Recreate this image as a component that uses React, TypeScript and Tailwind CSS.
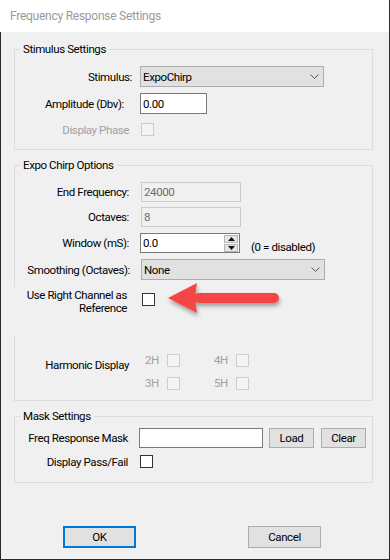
import React from "react";

function Check({ disabled = false, className = "" }: { disabled?: boolean; className?: string }) {
  return (
    <div
      className={
        "w-[13px] h-[13px] shrink-0 border " +
        (disabled ? "border-[#cccccc] bg-[#f4f4f4] " : "border-[#333333] bg-white ") +
        className
      }
    />
  );
}

function Chevron() {
  return (
    <svg width="9" height="5" viewBox="0 0 9 5" className="shrink-0">
      <path d="M0.5 0.5 L4.5 4.5 L8.5 0.5" stroke="#555" strokeWidth="1" fill="none" />
    </svg>
  );
}

function Select({ value }: { value: string }) {
  return (
    <div className="ml-[1px] w-[184px] h-[21px] border border-[#adadad] bg-[#e1e1e1] flex items-center justify-between pl-[2px] pr-[4px]">
      <span>{value}</span>
      <Chevron />
    </div>
  );
}

function Arrow() {
  return (
    <svg width="118" height="42" viewBox="0 0 118 42" className="shrink-0 -mt-[9px] ml-[11px]">
      <defs>
        <filter id="sh" x="-10%" y="-30%" width="130%" height="190%">
          <feDropShadow dx="1" dy="3" stdDeviation="2" floodColor="#000" floodOpacity="0.35" />
        </filter>
      </defs>
      <g filter="url(#sh)" fill="#f64545">
        <path d="M2 18 L31 3 Q28 18 31 33 Z" />
        <rect x="28" y="13" width="85" height="10" rx="5" />
      </g>
    </svg>
  );
}

export default function App() {
  return (
    <div className="w-[390px] h-[560px] flex flex-col font-['Roboto','Liberation_Sans',sans-serif] text-[11.5px] leading-[16px] tracking-[-0.4px] text-black border-r border-[#2b2b2b] overflow-hidden">
      <div className="h-[32px] shrink-0 bg-white flex items-center pl-[10px] text-[#9a9a9a] text-[12px] tracking-[-0.25px]">
        Frequency Response Settings
      </div>
      <div className="flex-1 bg-[#f0f0f0] border-l border-b border-[#2b2b2b] pl-[13px] flex flex-col">
        {/* Stimulus Settings */}
        <fieldset className="w-[359px] border border-[#dcdcdc] mt-[9px] pb-[13px]">
          <legend className="ml-[5px] px-[3px] leading-[16px]">Stimulus Settings</legend>
          <div className="flex items-center h-[21px] mt-[9px]">
            <div className="w-[125px] text-right pr-[8px]">Stimulus:</div>
            <div className="-ml-[1px]">
              <Select value="ExpoChirp" />
            </div>
          </div>
          <div className="flex items-center h-[21px] mt-[6px]">
            <div className="w-[125px] text-right pr-[16px]">Amplitude (Dbv):</div>
            <div className="w-[67px] h-[21px] border border-[#7a7a7a] bg-white flex items-center pl-[2px]">0.00</div>
          </div>
          <div className="flex items-center h-[13px] mt-[9px]">
            <div className="w-[125px] text-right pr-[11px] text-[#a0a0a0]">Display Phase</div>
            <Check disabled className="ml-[1px]" />
          </div>
        </fieldset>

        {/* Expo Chirp Options */}
        <fieldset className="w-[359px] border border-[#dcdcdc] mt-[7px] pb-[10px]">
          <legend className="ml-[5px] px-[3px] leading-[16px]">Expo Chirp Options</legend>
          <div className="flex items-center h-[20px] mt-[9px]">
            <div className="w-[125px] text-right pr-[11px]">End Frequency:</div>
            <div className="ml-[1px] w-[100px] h-[20px] border border-[#cccccc] bg-[#f0f0f0] text-[#6d6d6d] flex items-center pl-[2px]">
              24000
            </div>
          </div>
          <div className="flex items-center h-[20px] mt-[5px]">
            <div className="w-[125px] text-right pr-[11px]">Octaves:</div>
            <div className="ml-[1px] w-[100px] h-[20px] border border-[#cccccc] bg-[#f0f0f0] text-[#6d6d6d] flex items-center pl-[2px]">
              8
            </div>
          </div>
          <div className="flex items-start h-[20px] mt-[6px]">
            <div className="w-[125px] h-[20px] flex items-center justify-end pr-[11px]">Window (mS):</div>
            <div className="w-[100px] h-[20px] border border-[#7a7a7a] bg-white flex items-center justify-between pl-[2px] pr-[1px]">
              <span>0.0</span>
              <div className="w-[14px] h-[17px] flex flex-col gap-[1px]">
                <div className="flex-1 bg-[#e6e6e6] border border-[#b5b5b5] flex items-center justify-center">
                  <svg width="7" height="4" viewBox="0 0 7 4">
                    <path d="M0 4 L3.5 0 L7 4 Z" fill="#111" />
                  </svg>
                </div>
                <div className="flex-1 bg-[#e6e6e6] border border-[#b5b5b5] flex items-center justify-center">
                  <svg width="7" height="4" viewBox="0 0 7 4">
                    <path d="M0 0 L3.5 4 L7 0 Z" fill="#111" />
                  </svg>
                </div>
              </div>
            </div>
            <div className="ml-[11px] mt-[6px]">(0 = disabled)</div>
          </div>
          <div className="flex items-center h-[21px] mt-[6px]">
            <div className="w-[125px] text-right pr-[10px]">Smoothing (Octaves):</div>
            <Select value="None" />
          </div>
          <div className="-ml-[1px] pl-[1px] bg-[#f0f0f0] h-[48px] mt-[7px] pt-[2px]">
            <div className="flex items-start">
              <div className="w-[125px] text-right pr-[13px] leading-[13px]">
                Use Right Channel as
                <br />
                Reference
              </div>
              <Check className="mt-[4px] ml-[2px]" />
              <Arrow />
            </div>
          </div>
          <div className="flex items-start mt-[19px]">
            <div className="w-[125px] text-right pr-[11px] mt-[3px]">Harmonic Display</div>
            <div className="ml-[5px] grid grid-cols-[69px_69px] gap-y-[10px] text-[#a0a0a0] leading-[13px]">
              <div className="flex items-center h-[13px]">
                <span className="w-[22px]">2H</span>
                <Check disabled />
              </div>
              <div className="flex items-center h-[13px]">
                <span className="w-[22px]">4H</span>
                <Check disabled />
              </div>
              <div className="flex items-center h-[13px]">
                <span className="w-[22px]">3H</span>
                <Check disabled />
              </div>
              <div className="flex items-center h-[13px]">
                <span className="w-[22px]">5H</span>
                <Check disabled />
              </div>
            </div>
          </div>
        </fieldset>

        {/* Mask Settings */}
        <fieldset className="w-[359px] border border-[#dcdcdc] mt-[7px] pb-[14px]">
          <legend className="ml-[5px] px-[3px] leading-[16px]">Mask Settings</legend>
          <div className="flex items-center h-[20px] mt-[4px]">
            <div className="w-[124px] text-right pr-[11px]">Freq Response Mask</div>
            <div className="w-[124px] h-[20px] border border-[#7a7a7a] bg-white" />
            <div className="ml-[6px] w-[45px] h-[20px] border border-[#adadad] bg-[#e1e1e1] flex items-center justify-center">
              Load
            </div>
            <div className="ml-[7px] w-[45px] h-[20px] border border-[#adadad] bg-[#e1e1e1] flex items-center justify-center">
              Clear
            </div>
          </div>
          <div className="flex items-center h-[13px] mt-[7px]">
            <div className="w-[124px] text-right pr-[11px]">Display Pass/Fail</div>
            <Check className="ml-[1px]" />
          </div>
        </fieldset>

        <div className="flex mt-[43px] pl-[49px]">
          <div className="w-[73px] h-[22px] border-2 border-[#0078d7] bg-[#e1e1e1] flex items-center justify-center">
            OK
          </div>
          <div className="ml-[112px] w-[73px] h-[22px] border border-[#adadad] bg-[#e1e1e1] flex items-center justify-center">
            Cancel
          </div>
        </div>
      </div>
    </div>
  );
}
